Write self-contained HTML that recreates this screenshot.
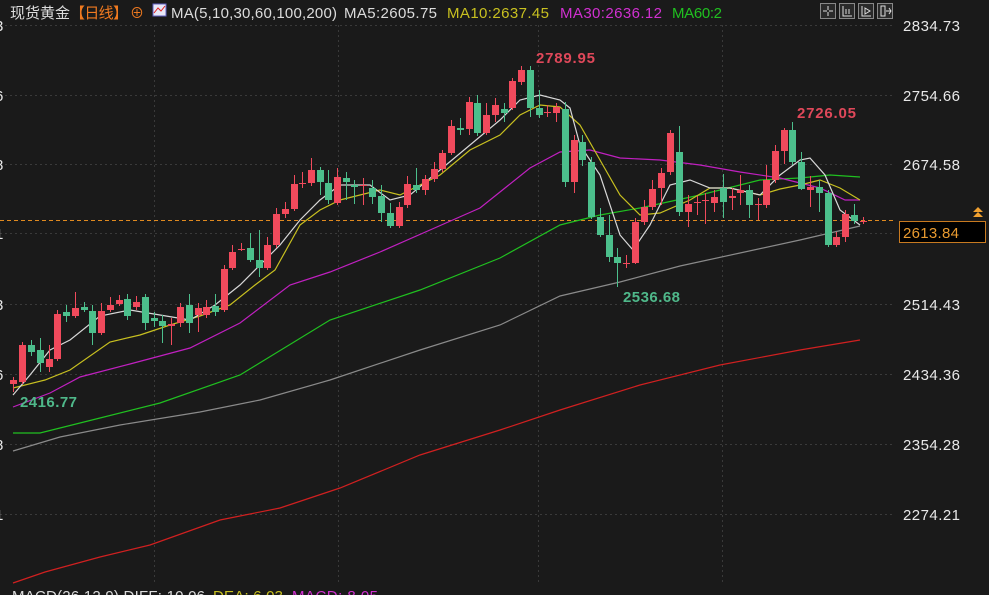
<!DOCTYPE html>
<html><head><meta charset="utf-8"><style>
html,body{margin:0;padding:0;background:#1a1a1a;width:989px;height:595px;overflow:hidden}
svg{display:block}
text{font-family:"Liberation Sans","Noto Sans CJK SC",sans-serif}
</style></head><body>
<svg id="s" width="989" height="595" xmlns="http://www.w3.org/2000/svg">
<rect width="989" height="595" fill="#1a1a1a"/>
<g stroke="#3a3a3a" stroke-dasharray="2,3" stroke-width="1">
<line x1="0" y1="25.5" x2="893" y2="25.5"/><line x1="0" y1="95.5" x2="893" y2="95.5"/>
<line x1="0" y1="164.5" x2="893" y2="164.5"/><line x1="0" y1="233.5" x2="893" y2="233.5"/>
<line x1="0" y1="304.5" x2="893" y2="304.5"/><line x1="0" y1="374.5" x2="893" y2="374.5"/>
<line x1="0" y1="444.5" x2="893" y2="444.5"/><line x1="0" y1="514.5" x2="893" y2="514.5"/>
<line x1="154.5" y1="25" x2="154.5" y2="583"/><line x1="338.5" y1="25" x2="338.5" y2="583"/>
<line x1="538.5" y1="25" x2="538.5" y2="583"/><line x1="722.5" y1="25" x2="722.5" y2="583"/>
</g>
<line x1="0" y1="220.5" x2="895" y2="220.5" stroke="#e08a20" stroke-dasharray="4,3" stroke-width="1"/>
<g id="ma" fill="none" stroke-width="1.2"></g>
<g id="c"></g>
<g font-size="15" fill="#e8e8e8">
<text x="903" y="31" textLength="57">2834.73</text><text x="903" y="101" textLength="57">2754.66</text>
<text x="903" y="170" textLength="57">2674.58</text><text x="903" y="310" textLength="57">2514.43</text>
<text x="903" y="380" textLength="57">2434.36</text><text x="903" y="450" textLength="57">2354.28</text>
<text x="903" y="520" textLength="57">2274.21</text>
<text x="-5" y="31">3</text><text x="-5" y="101">6</text><text x="-5" y="170">8</text><text x="-5" y="239">1</text>
<text x="-5" y="310">3</text><text x="-5" y="380">6</text><text x="-5" y="450">8</text><text x="-5" y="520">1</text>
</g>
<rect x="899.5" y="221.5" width="86" height="21" fill="#000" stroke="#c87a20"/>
<text x="903" y="238" font-size="15" fill="#e89a30" textLength="56">2613.84</text>
<path d="M973 212 L978 207 L983 212 Z M973 217 L978 212 L983 217 Z" fill="#f0a030"/>
<g font-size="15" font-weight="bold">
<text x="536" y="63" fill="#e0485a" textLength="59">2789.95</text>
<text x="797" y="118" fill="#e0485a" textLength="59">2726.05</text>
<text x="623" y="302" fill="#4fb88a" textLength="57">2536.68</text>
<text x="20" y="407" fill="#4fb88a" textLength="57">2416.77</text>
</g>
<g font-size="15">
<text x="10" y="18" fill="#dcdcdc" textLength="60">现货黄金</text>
<text x="70" y="18" fill="#f07a20" textLength="58">【日线】</text>
<text x="130" y="18" fill="#f07a20" font-size="14">⊕</text>
<rect x="153" y="4" width="13" height="12" fill="#e8e8f8" stroke="#6060c0"/>
<path d="M154 13 L158 8 L161 11 L165 6" stroke="#e02020" fill="none"/>
<text x="171" y="18" fill="#dcdcdc" textLength="166">MA(5,10,30,60,100,200)</text>
<text x="344" y="18" fill="#dcdcdc" textLength="93">MA5:2605.75</text>
<text x="447" y="18" fill="#c8c020" textLength="102">MA10:2637.45</text>
<text x="560" y="18" fill="#d030d0" textLength="102">MA30:2636.12</text>
<text x="672" y="18" fill="#20c020" textLength="50">MA60:2</text>
<text x="12" y="601" fill="#dcdcdc" textLength="193">MACD(26,12,9) DIFF: 10.06</text>
<text x="213" y="601" fill="#c8c020" textLength="70">DEA: 6.03</text>
<text x="292" y="601" fill="#d030d0" textLength="86">MACD: 8.05</text>
</g>
<g stroke="#888" fill="#2a2a2a">
<rect x="820.5" y="3.5" width="15" height="15"/><rect x="839.5" y="3.5" width="15" height="15"/>
<rect x="858.5" y="3.5" width="15" height="15"/><rect x="877.5" y="3.5" width="15" height="15"/>
</g>
<g stroke="#ddd" fill="none">
<path d="M828 6v4M828 12v4M823 11h4M829 11h4"/>
<path d="M843 6v10h9M846 9v5M849 9v5"/>
<path d="M862 6v10h9M865 8l5 3-5 3z"/>
<path d="M881 6h4v10h-4zM886 11h5M889 8l2 3-2 3"/>
</g>
</svg>
<script>
var ns="http://www.w3.org/2000/svg";
function pl(col,pts){var p=document.createElementNS(ns,"polyline");p.setAttribute("points",pts);p.setAttribute("stroke",col);document.getElementById("ma").appendChild(p);}
pl("#d02020","13,583 45,572 100,557 150,545 220,520 280,508 340,488 420,455 500,430 560,410 640,385 720,365 800,350 860,340");
pl("#8a8a8a","13,451 60,437 120,425 200,412 260,400 330,380 420,350 500,325 560,296 620,282 680,266 740,253 800,240 860,226");
pl("#20c020","13,433 40,433 60,428 100,418 160,403 240,375 330,320 420,290 500,258 560,225 600,215 640,208 700,195 760,180 800,178 830,175 860,177");
pl("#c020c0","13,407 50,393 80,377 130,364 190,348 240,323 290,285 330,272 380,252 430,230 480,208 530,168 560,152 590,150 620,158 660,160 700,165 740,172 780,178 820,188 845,200 860,200");
pl("#c8c020","13,388 45,380 70,370 110,342 140,335 170,325 200,316 230,305 255,285 275,270 300,225 320,210 340,200 380,190 400,195 420,185 440,175 470,150 500,135 520,115 540,105 560,107 580,125 600,160 620,195 640,215 660,213 690,200 710,188 730,188 760,195 780,189 800,185 820,180 840,188 860,200");
pl("#d8d8d8","13,395 30,375 50,350 70,340 100,316 130,310 160,315 190,320 215,305 240,285 260,265 280,245 300,220 320,200 340,185 370,185 390,200 410,195 440,170 470,145 500,120 520,100 540,95 560,100 570,108 580,145 600,175 620,235 633,250 650,225 670,185 690,180 710,188 730,188 760,195 780,175 800,160 810,158 825,175 840,210 860,225");
var C=[[13,384,380,377,392],[22,382,345,342,384],[31,345,352,340,356],[40,350,363,338,372],[49,367,359,345,372],[57,359,314,310,361],[66,312,316,305,322],[75,316,308,292,318],[84,307,310,302,312],[92,311,333,305,345],[101,333,311,303,335],[110,310,305,297,312],[119,304,300,295,306],[127,299,316,294,320],[136,307,302,296,310],[145,297,323,294,330],[154,318,321,312,327],[162,321,326,315,343],[171,326,324,318,345],[180,323,307,303,327],[189,305,323,294,333],[198,315,308,303,332],[206,315,307,300,318],[215,306,312,294,316],[224,310,269,265,312],[232,268,252,245,270],[241,249,249,243,251],[250,248,260,233,262],[259,260,268,230,277],[267,268,245,237,270],[276,245,214,208,248],[285,214,209,202,218],[294,209,184,175,211],[302,183,183,172,188],[311,183,170,158,186],[320,170,182,167,195],[328,183,200,170,204],[337,203,177,168,205],[346,178,182,172,200],[354,185,187,180,204],[363,185,185,178,205],[372,188,197,180,204],[381,196,213,185,222],[390,213,226,203,228],[399,226,207,202,228],[407,205,184,176,208],[416,185,190,168,193],[425,190,179,175,195],[434,179,169,162,182],[442,169,153,150,172],[451,153,126,120,155],[460,128,130,118,135],[469,129,102,97,135],[477,103,133,95,136],[486,133,115,103,135],[495,115,105,98,122],[504,109,113,103,122],[512,108,81,78,110],[521,82,70,66,85],[530,70,108,66,117],[539,108,115,90,118],[547,112,112,105,117],[556,113,107,103,122],[565,109,182,102,187],[574,182,140,135,193],[582,142,160,135,166],[591,162,217,157,219],[600,217,235,208,237],[609,235,257,215,262],[617,257,263,248,287],[626,263,263,255,268],[635,263,222,218,264],[644,222,207,200,225],[652,207,189,180,210],[661,188,173,168,205],[670,172,133,130,175],[679,152,212,126,216],[688,212,204,195,227],[697,202,202,196,215],[705,200,200,193,224],[714,203,197,190,212],[723,188,202,174,218],[732,198,196,188,210],[740,193,190,175,205],[749,190,205,185,218],[758,204,204,198,220],[766,205,180,165,208],[775,180,151,145,183],[784,151,130,128,164],[792,130,162,122,165],[801,162,189,152,190],[810,190,187,176,207],[819,187,193,180,212],[828,193,245,190,247],[836,245,237,232,247],[845,237,214,210,242],[854,215,221,204,224],[863,221,221,217,224]];
var g=document.getElementById("c");
C.forEach(function(d){var x=d[0],o=d[1],c=d[2];var col=(c<o)?"#f04a5c":(c>o?"#4cbf8c":"#f04a5c");
var l=document.createElementNS(ns,"line");l.setAttribute("x1",x+0.5);l.setAttribute("x2",x+0.5);l.setAttribute("y1",d[3]);l.setAttribute("y2",d[4]);l.setAttribute("stroke",col);g.appendChild(l);
var t=Math.min(o,c),h=Math.max(1,Math.abs(o-c));var r=document.createElementNS(ns,"rect");r.setAttribute("x",x-3);r.setAttribute("y",t);r.setAttribute("width",7);r.setAttribute("height",h);r.setAttribute("fill",col);g.appendChild(r);});
</script>
</body></html>
